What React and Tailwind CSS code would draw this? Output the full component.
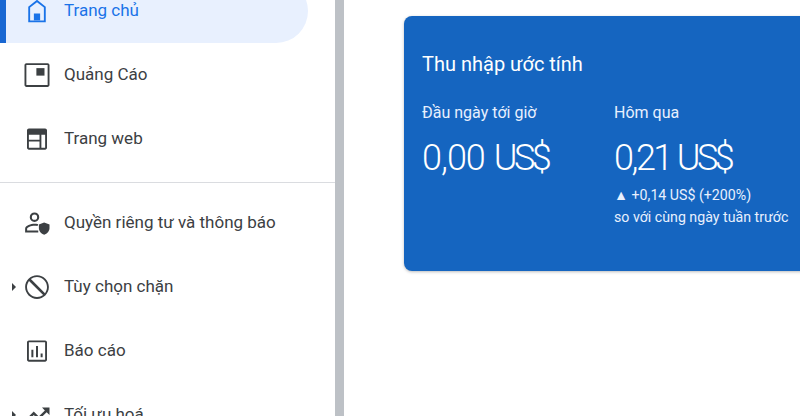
const ACTIVE = "#1a73e8";

function Icon({ children, color = "#3c4043" }) {
  return (
    <svg viewBox="0 0 24 24" className="h-[30px] w-[30px] shrink-0" fill={color}>
      {children}
    </svg>
  );
}

const HomeIcon = () => (
  <Icon color={ACTIVE}>
    <path d="M12 3 5 8.500V21h14V8.500L12 3zm5.500 16.500h-11V9.200L12 4.900l5.500 4.300v10.300z" />
    <path d="M9.500 14h5v5.500h-5z" />
  </Icon>
);

const AdsIcon = () => (
  <Icon>
    <path d="M20.500 2.500h-17C2.700 2.500 2 3.200 2 4v16c0 .8.700 1.500 1.500 1.500h17c.8 0 1.500-.7 1.500-1.500V4c0-.8-.7-1.500-1.500-1.500zm0 17.500h-17V4h17v16z" />
    <path d="M11.500 6.500H18v6h-6.500z" />
  </Icon>
);

const WebIcon = () => (
  <Icon>
    <path d="M18.500 3.500h-13C4.700 3.500 4 4.200 4 5v14c0 .8.700 1.500 1.500 1.500h13c.8 0 1.500-.7 1.500-1.500V5c0-.8-.7-1.500-1.500-1.500zM5.500 8.500h8.500v4H5.500v-4zm0 5.500h8.500v5H5.500v-5zm10 5V8.500h3V19h-3z" />
  </Icon>
);

const PrivacyIcon = () => (
  <Icon>
    <path d="M10 3.500a3.800 3.800 0 1 0 0 7.600 3.800 3.800 0 0 0 0-7.600zm0 1.700a2.100 2.100 0 1 1 0 4.200 2.100 2.100 0 0 1 0-4.200z" />
    <path d="M10 12.500c-2.700 0-7.500 1.300-7.500 4v3h10.500v-1.600H4.100v-1.400c0-1 3.200-2.400 5.900-2.400.8 0 1.600.1 2.400.3l.6-1.500c-1.100-.3-2.200-.4-3-.4z" />
    <path d="M17.700 11.500 13.500 13.200V16c0 2.500 1.800 4.800 4.200 5.400 2.400-.6 4.300-2.900 4.300-5.400v-2.800l-4.300-1.700z" />
  </Icon>
);

const BlockIcon = () => (
  <Icon>
    <path d="M12 2.500c-5.200 0-9.500 4.300-9.500 9.500s4.300 9.500 9.500 9.500 9.500-4.300 9.500-9.500-4.300-9.500-9.500-9.500zm8 9.500c0 1.800-.6 3.500-1.600 4.900L7.100 5.600A7.900 7.900 0 0 1 12 4c4.400 0 8 3.600 8 8zM4 12c0-1.800.6-3.500 1.600-4.900l11.300 11.300A7.900 7.900 0 0 1 12 20c-4.400 0-8-3.600-8-8z" />
  </Icon>
);

const ReportIcon = () => (
  <Icon>
    <path d="M18.500 3.500h-13C4.700 3.500 4 4.200 4 5v14c0 .8.700 1.500 1.500 1.500h13c.8 0 1.500-.7 1.500-1.500V5c0-.8-.7-1.500-1.500-1.500zm0 15.500h-13V5h13v14z" />
    <path d="M7.500 11h1.600v6H7.500zM11.200 8h1.600v9h-1.600zM14.900 14h1.600v3h-1.600z" />
  </Icon>
);

const OptimizeIcon = () => (
  <Icon>
    <path d="M16 6l2.300 2.300-4.900 4.900-4-4L2 16.600 3.400 18l6-6 4 4 6.300-6.300L22 12V6h-6z" />
  </Icon>
);

function Caret() {
  return <span className="mr-[6px] ml-[12px] h-0 w-0 shrink-0 border-y-[4px] border-l-[4px] border-y-transparent border-l-[#3c4043]" />;
}

function NavRow({ icon, label, caret, active }) {
  return (
    <div
      className={`flex h-16 items-center ${active ? "mr-[27px] rounded-r-[32px] bg-[#e8f0fe] text-[#1a73e8]" : "text-[#3c4043]"}`}
    >
      {active && <span className="h-full w-[6px] shrink-0 bg-[#1967d2]" />}
      {caret ? <Caret /> : <span className={active ? "w-[16px] shrink-0" : "w-[22px] shrink-0"} />}
      {icon}
      <span className="ml-3 whitespace-nowrap text-[17px]">{label}</span>
    </div>
  );
}

function Money({ value, className }) {
  return (
    <div className={`mt-[13px] flex h-[44px] items-center text-[36px] font-light whitespace-nowrap ${className}`}>
      <span>{value}</span>
      <span className="tracking-[-3.5px]">US$</span>
    </div>
  );
}

export default function App() {
  return (
    <div className="flex h-[416px] w-[800px] overflow-hidden bg-white font-['Roboto',sans-serif]">
      <aside className="-mt-[21px] w-[335px] shrink-0">
        <NavRow active icon={<HomeIcon />} label="Trang chủ" />
        <NavRow icon={<AdsIcon />} label="Quảng Cáo" />
        <NavRow icon={<WebIcon />} label="Trang web" />
        <div className="mt-[11px] mb-2 h-px bg-[#dadce0]" />
        <NavRow icon={<PrivacyIcon />} label="Quyền riêng tư và thông báo" />
        <NavRow caret icon={<BlockIcon />} label="Tùy chọn chặn" />
        <NavRow icon={<ReportIcon />} label="Báo cáo" />
        <NavRow caret icon={<OptimizeIcon />} label="Tối ưu hoá" />
      </aside>
      <div className="w-[9px] shrink-0 bg-[#bdc1c6]" />
      <main className="min-w-0 flex-1 pt-4 pl-[60px]">
        <section className="h-[255px] w-[420px] rounded-lg bg-[#1565c0] px-[18px] pt-[34px] text-white shadow-[0_1px_3px_rgba(60,64,67,0.35)]">
          <h2 className="text-[20px] leading-[28px] font-normal">Thu nhập ước tính</h2>
          <div className="mt-[25px] flex">
            <div className="w-[192px] shrink-0">
              <div className="text-[16px] leading-[20px] text-[#e8f0fe]">Đầu ngày tới giờ</div>
              <Money value="0,00" className="gap-[9px] tracking-[-1px]" />
            </div>
            <div>
              <div className="text-[16px] leading-[20px] text-[#e8f0fe]">Hôm qua</div>
              <Money value="0,21" className="gap-[6px] tracking-[-2.5px]" />
              <div className="mt-[4px] text-[14.2px] leading-[22px] whitespace-nowrap text-[#e8f0fe]">
                <div>▲ +0,14 US$ (+200%)</div>
                <div>so với cùng ngày tuần trước</div>
              </div>
            </div>
          </div>
        </section>
      </main>
    </div>
  );
}
